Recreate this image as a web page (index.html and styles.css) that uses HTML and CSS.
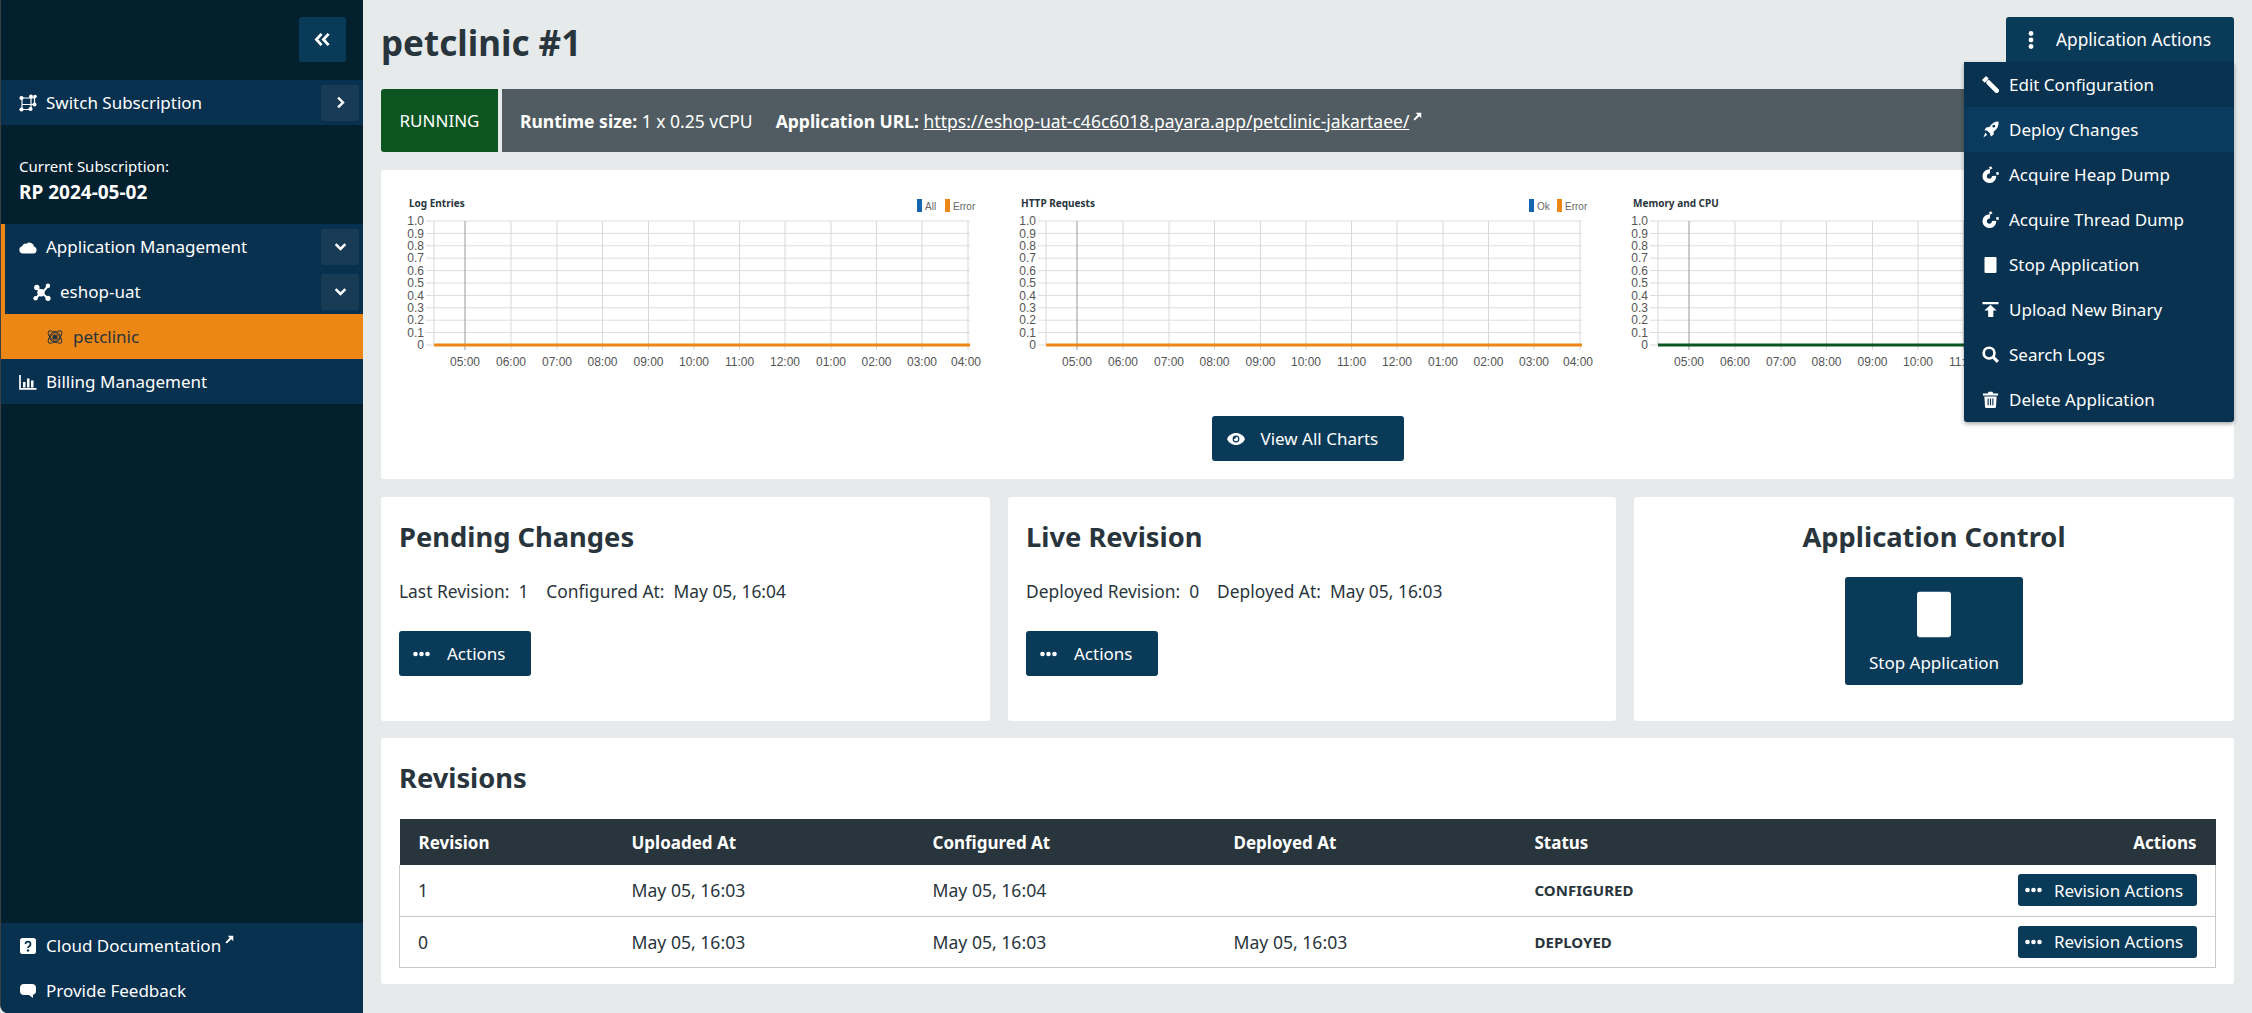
FILE: index.html
```html
<!DOCTYPE html>
<html lang="en">
<head>
<meta charset="utf-8">
<title>petclinic #1</title>
<link rel="stylesheet" href="styles.css">
</head>
<body>
<svg class="sprite" xmlns="http://www.w3.org/2000/svg">
  <symbol id="i-dbl" viewBox="0 0 18 16"><path d="M8 2L2.500 8 8 14M15.500 2L10 8l5.500 6" fill="none" stroke="currentColor" stroke-width="3"/></symbol>
  <symbol id="i-right" viewBox="0 0 16 16"><path d="M5 2l6 6-6 6" fill="none" stroke="currentColor" stroke-width="3"/></symbol>
  <symbol id="i-down" viewBox="0 0 16 16"><path d="M2 5l6 6 6-6" fill="none" stroke="currentColor" stroke-width="3"/></symbol>
  <symbol id="i-project" viewBox="0 0 18 18"><path d="M3 4h13M15.500 3V11M15 10.500H3M3 3.500v12M3 15.500h8.500M12 3v12" fill="none" stroke="currentColor" stroke-width="1.200"/><g fill="currentColor"><circle cx="2.500" cy="4" r="2.100"/><circle cx="12" cy="2.500" r="2"/><circle cx="16" cy="2.500" r="1.800"/><circle cx="15.500" cy="10.500" r="2"/><circle cx="2.500" cy="15.500" r="2.100"/><circle cx="11.500" cy="15" r="2.100"/></g></symbol>
  <symbol id="i-cloud" viewBox="0 0 18 14"><path d="M4 13.500a3.700 3.700 0 0 1-.8-7.300A3.400 3.400 0 0 1 7.600 3.700 4.700 4.700 0 0 1 15.200 6.700 3.500 3.500 0 0 1 14.500 13.500z" fill="currentColor"/></symbol>
  <symbol id="i-nodes" viewBox="0 0 18 18"><path d="M4 4.500l4 5M15 3l-6 7M8 10l-5 5M9 10l6 5.500" fill="none" stroke="currentColor" stroke-width="2"/><g fill="currentColor"><circle cx="3.800" cy="4.500" r="2.700"/><circle cx="15" cy="2.800" r="2.200"/><circle cx="8" cy="9.800" r="3.700"/><circle cx="2.600" cy="15.200" r="2.200"/><circle cx="15" cy="15.300" r="2.600"/></g></symbol>
  <symbol id="i-atom" viewBox="0 0 18 18"><g fill="none" stroke="currentColor" stroke-width="1"><ellipse cx="9" cy="9" rx="8.400" ry="3.800" transform="rotate(40 9 9)"/><ellipse cx="9" cy="9" rx="8.400" ry="3.800" transform="rotate(-40 9 9)"/><circle cx="9" cy="9" r="5.400"/></g><circle cx="9" cy="9" r="2.600" fill="currentColor"/></symbol>
  <symbol id="i-bars" viewBox="0 0 18 16"><path d="M1 1v13.800h16.500" fill="none" stroke="currentColor" stroke-width="1.700"/><path d="M4 8h2.500v5.500H4zM8 4.500h2.500v9H8zM12 6.500h2.500v7H12z" fill="currentColor"/></symbol>
  <symbol id="i-help" viewBox="0 0 16 16"><path d="M2.500 0h11A2.500 2.500 0 0 1 16 2.500v11a2.500 2.500 0 0 1-2.500 2.500h-11A2.500 2.500 0 0 1 0 13.500v-11A2.500 2.500 0 0 1 2.500 0z" fill="currentColor"/><path d="M5.500 6a2.500 2.500 0 1 1 3.800 2.200c-.8.500-1.300.9-1.300 1.900" fill="none" stroke="#08304f" stroke-width="1.800"/><circle cx="8" cy="12.500" r="1.200" fill="#08304f"/></symbol>
  <symbol id="i-comment" viewBox="0 0 16 14"><path d="M4 0h8a4 4 0 0 1 4 4v3a4 4 0 0 1-3 3.800V14l-4-3H4a4 4 0 0 1-4-4V4a4 4 0 0 1 4-4z" fill="currentColor"/></symbol>
  <symbol id="i-ext" viewBox="0 0 10 10"><path d="M3 .8h6.200V7L7 4.800 2 9.500.5 8 5.200 3z" fill="currentColor"/></symbol>
  <symbol id="i-dots-v" viewBox="0 0 6 18"><g fill="currentColor"><circle cx="3" cy="2.500" r="2.400"/><circle cx="3" cy="9" r="2.400"/><circle cx="3" cy="15.500" r="2.400"/></g></symbol>
  <symbol id="i-dots-h" viewBox="0 0 18 6"><g fill="currentColor"><circle cx="3" cy="3" r="2.300"/><circle cx="9" cy="3" r="2.300"/><circle cx="15" cy="3" r="2.300"/></g></symbol>
  <symbol id="i-wand" viewBox="0 0 18 18"><path d="M7 7L15.500 15.500" stroke="currentColor" stroke-width="5" stroke-linecap="round"/><path d="M0 4.300L4.300 0 7.200 2.900 2.900 7.200z" fill="currentColor"/></symbol>
  <symbol id="i-rocket" viewBox="0 0 18 18"><path d="M17.500.5c.4 4.500-1.200 8-5 10.500l-.3 3.500-3 1.800-.6-3-3-3-3-.5 1.700-3 3.500-.4C11 2.300 13.300.4 17.500.5z" fill="currentColor"/><path d="M3.500 12.500l2 2-4 3z" fill="currentColor"/><circle cx="12.500" cy="5.500" r="1.400" fill="#0a3a5d"/></symbol>
  <symbol id="i-magnet" viewBox="0 0 18 18"><path d="M8.500 5.800A5 5 0 1 0 12.800 10.500" fill="none" stroke="currentColor" stroke-width="4.600"/><path d="M7.200 1.500L9.500.3l1.700 2.200-2.400 1.300zM14.800 7l2.500-.8.700 2.700-2.500.7z" fill="currentColor"/></symbol>
  <symbol id="i-stop" viewBox="0 0 12 16"><rect width="12" height="16" rx="1" fill="currentColor"/></symbol>
  <symbol id="i-upload" viewBox="0 0 18 16"><path d="M.5 0h17v2.500H.5zM9 3l6.500 6H12v7H6.500V9H2.500z" fill="currentColor"/></symbol>
  <symbol id="i-search" viewBox="0 0 18 18"><circle cx="7.500" cy="7.500" r="5.700" fill="none" stroke="currentColor" stroke-width="2.800"/><path d="M11.500 11.500l5.300 5.300" stroke="currentColor" stroke-width="3.200"/></symbol>
  <symbol id="i-trash" viewBox="0 0 16 18"><path d="M0 2.700h5L6 .7h4l1 2h5v2H0z" fill="currentColor"/><path d="M1.500 5.700h13l-.7 11a1.300 1.300 0 0 1-1.300 1.300h-9a1.300 1.300 0 0 1-1.300-1.300z" fill="currentColor"/><path d="M5.500 8v7M8 8v7M10.500 8v7" stroke="#08324f" stroke-width="1.200"/></symbol>
  <symbol id="i-eye" viewBox="0 0 18 12"><path d="M9 0c4 0 7.500 2.500 9 6-1.500 3.500-5 6-9 6s-7.500-2.500-9-6c1.500-3.500 5-6 9-6z" fill="currentColor"/><circle cx="9" cy="6" r="3.400" fill="#093a58"/><path d="M9 3.800a2.200 2.200 0 1 1-2.200 2.200c1 .4 2.400-.9 2.200-2.200z" fill="currentColor"/></symbol>
  <symbol id="chart-grid" viewBox="0 0 590 190">
    <path class="grid-h" d="M27 31H571M27 43.400H571M27 55.800H571M27 68.200H571M27 80.600H571M27 93H571M27 105.400H571M27 117.800H571M27 130.200H571M27 142.600H571M27 155H35"/>
    <path class="grid-v" d="M35 31V155M112 31V160M158 31V160M203.500 31V160M249.500 31V160M295 31V160M340.500 31V160M386 31V160M432 31V160M477.500 31V160M523 31V160M569 31V160"/>
    <path class="grid-first" d="M66 31V160"/>
  </symbol>
</svg>

<div class="app">
  <aside class="sidebar">
    <div class="side-top"><button class="collapse"><svg class="ic-dbl"><use href="#i-dbl"/></svg></button></div>
    <div class="side-row">
      <svg class="ic"><use href="#i-project"/></svg><span class="side-label">Switch Subscription</span>
      <span class="side-btn"><svg class="ic-chev"><use href="#i-right"/></svg></span>
    </div>
    <div class="current">
      <div class="current-label">Current Subscription:</div>
      <div class="current-name">RP 2024-05-02</div>
    </div>
    <div class="nav-group">
      <div class="side-row in-group">
        <svg class="ic"><use href="#i-cloud"/></svg><span class="side-label">Application Management</span>
        <span class="side-btn"><svg class="ic-chev"><use href="#i-down"/></svg></span>
      </div>
      <div class="side-row in-group level-2">
        <svg class="ic"><use href="#i-nodes"/></svg><span class="side-label">eshop-uat</span>
        <span class="side-btn"><svg class="ic-chev"><use href="#i-down"/></svg></span>
      </div>
    </div>
    <div class="side-row active">
      <svg class="ic"><use href="#i-atom"/></svg><span class="side-label">petclinic</span>
    </div>
    <div class="side-row">
      <svg class="ic"><use href="#i-bars"/></svg><span class="side-label">Billing Management</span>
    </div>
    <div class="side-footer">
      <div class="side-row">
        <svg class="ic ic-small"><use href="#i-help"/></svg><span class="side-label">Cloud Documentation</span><svg class="ic-ext"><use href="#i-ext"/></svg>
      </div>
      <div class="side-row">
        <svg class="ic ic-small"><use href="#i-comment"/></svg><span class="side-label">Provide Feedback</span>
      </div>
    </div>
  </aside>

  <main class="main">
    <header class="page-head">
      <h1>petclinic #1</h1>
      <button class="app-actions"><svg class="ic-dots-v"><use href="#i-dots-v"/></svg>Application Actions</button>
    </header>

    <ul class="menu">
      <li><svg class="ic"><use href="#i-wand"/></svg>Edit Configuration</li>
      <li class="hover"><svg class="ic"><use href="#i-rocket"/></svg>Deploy Changes</li>
      <li><svg class="ic"><use href="#i-magnet"/></svg>Acquire Heap Dump</li>
      <li><svg class="ic"><use href="#i-magnet"/></svg>Acquire Thread Dump</li>
      <li><svg class="ic ic-stop"><use href="#i-stop"/></svg>Stop Application</li>
      <li><svg class="ic"><use href="#i-upload"/></svg>Upload New Binary</li>
      <li><svg class="ic"><use href="#i-search"/></svg>Search Logs</li>
      <li><svg class="ic"><use href="#i-trash"/></svg>Delete Application</li>
    </ul>

    <div class="status">
      <div class="status-state">RUNNING</div>
      <div class="status-info">
        <span class="info-item"><b>Runtime size:</b> 1 x 0.25 vCPU</span>
        <span class="info-item"><b>Application URL:</b> <a href="#" class="url">https://eshop-uat-c46c6018.payara.app/petclinic-jakartaee/</a><svg class="ic-ext"><use href="#i-ext"/></svg></span>
      </div>
    </div>

    <section class="card chart-card">
      <div class="charts">
        <svg class="chart" viewBox="0 0 590 190">
          <use href="#chart-grid" width="590" height="190"/>
          <g class="axis-y"><text x="25" y="35">1.0</text><text x="25" y="47.500">0.9</text><text x="25" y="60">0.8</text><text x="25" y="72">0.7</text><text x="25" y="84.500">0.6</text><text x="25" y="97">0.5</text><text x="25" y="109.500">0.4</text><text x="25" y="122">0.3</text><text x="25" y="134">0.2</text><text x="25" y="146.500">0.1</text><text x="25" y="159">0</text></g>
          <g class="axis-x"><text x="66" y="176">05:00</text><text x="112" y="176">06:00</text><text x="158" y="176">07:00</text><text x="203.500" y="176">08:00</text><text x="249.500" y="176">09:00</text><text x="295" y="176">10:00</text><text x="340.500" y="176">11:00</text><text x="386" y="176">12:00</text><text x="432" y="176">01:00</text><text x="477.500" y="176">02:00</text><text x="523" y="176">03:00</text><text x="567" y="176">04:00</text></g>
          <path class="line-orange" d="M35 155H571"/>
          <text class="chart-title" x="10" y="17">Log Entries</text>
          <rect class="lg-blue" x="518" y="9" width="5" height="13"/><text class="lg-text" x="526" y="20">All</text>
          <rect class="lg-orange" x="546" y="9" width="5" height="13"/><text class="lg-text" x="554" y="20">Error</text>
        </svg>
        <svg class="chart" viewBox="0 0 590 190">
          <use href="#chart-grid" width="590" height="190"/>
          <g class="axis-y"><text x="25" y="35">1.0</text><text x="25" y="47.500">0.9</text><text x="25" y="60">0.8</text><text x="25" y="72">0.7</text><text x="25" y="84.500">0.6</text><text x="25" y="97">0.5</text><text x="25" y="109.500">0.4</text><text x="25" y="122">0.3</text><text x="25" y="134">0.2</text><text x="25" y="146.500">0.1</text><text x="25" y="159">0</text></g>
          <g class="axis-x"><text x="66" y="176">05:00</text><text x="112" y="176">06:00</text><text x="158" y="176">07:00</text><text x="203.500" y="176">08:00</text><text x="249.500" y="176">09:00</text><text x="295" y="176">10:00</text><text x="340.500" y="176">11:00</text><text x="386" y="176">12:00</text><text x="432" y="176">01:00</text><text x="477.500" y="176">02:00</text><text x="523" y="176">03:00</text><text x="567" y="176">04:00</text></g>
          <path class="line-orange" d="M35 155H571"/>
          <text class="chart-title" x="10" y="17">HTTP Requests</text>
          <rect class="lg-blue" x="518" y="9" width="5" height="13"/><text class="lg-text" x="526" y="20">Ok</text>
          <rect class="lg-orange" x="546" y="9" width="5" height="13"/><text class="lg-text" x="554" y="20">Error</text>
        </svg>
        <svg class="chart" viewBox="0 0 590 190">
          <use href="#chart-grid" width="590" height="190"/>
          <g class="axis-y"><text x="25" y="35">1.0</text><text x="25" y="47.500">0.9</text><text x="25" y="60">0.8</text><text x="25" y="72">0.7</text><text x="25" y="84.500">0.6</text><text x="25" y="97">0.5</text><text x="25" y="109.500">0.4</text><text x="25" y="122">0.3</text><text x="25" y="134">0.2</text><text x="25" y="146.500">0.1</text><text x="25" y="159">0</text></g>
          <g class="axis-x"><text x="66" y="176">05:00</text><text x="112" y="176">06:00</text><text x="158" y="176">07:00</text><text x="203.500" y="176">08:00</text><text x="249.500" y="176">09:00</text><text x="295" y="176">10:00</text><text x="340.500" y="176">11:00</text></g>
          <path class="line-green" d="M35 155H571"/>
          <text class="chart-title" x="10" y="17">Memory and CPU</text>
        </svg>
      </div>
      <button class="btn btn-charts"><svg class="ic-eye"><use href="#i-eye"/></svg>View All Charts</button>
    </section>

    <div class="panels">
      <section class="card panel">
        <h2>Pending Changes</h2>
        <p class="panel-info"><span>Last Revision:&nbsp; 1</span><span>Configured At:&nbsp; May 05, 16:04</span></p>
        <button class="btn btn-actions"><svg class="ic-dots-h"><use href="#i-dots-h"/></svg>Actions</button>
      </section>
      <section class="card panel">
        <h2>Live Revision</h2>
        <p class="panel-info"><span>Deployed Revision:&nbsp; 0</span><span>Deployed At:&nbsp; May 05, 16:03</span></p>
        <button class="btn btn-actions"><svg class="ic-dots-h"><use href="#i-dots-h"/></svg>Actions</button>
      </section>
      <section class="card panel panel-center">
        <h2>Application Control</h2>
        <button class="btn btn-stop"><svg class="ic-stop-large"><use href="#i-stop"/></svg>Stop Application</button>
      </section>
    </div>

    <section class="card revisions">
      <h2>Revisions</h2>
      <table>
        <colgroup><col class="col-rev"><col class="col-std"><col class="col-std"><col class="col-std"><col class="col-std"><col></colgroup>
        <thead>
          <tr><th>Revision</th><th>Uploaded At</th><th>Configured At</th><th>Deployed At</th><th>Status</th><th class="right">Actions</th></tr>
        </thead>
        <tbody>
          <tr><td>1</td><td>May 05, 16:03</td><td>May 05, 16:04</td><td></td><td class="state">CONFIGURED</td><td class="right"><button class="btn btn-rev"><svg class="ic-dots-h"><use href="#i-dots-h"/></svg>Revision Actions</button></td></tr>
          <tr><td>0</td><td>May 05, 16:03</td><td>May 05, 16:03</td><td>May 05, 16:03</td><td class="state">DEPLOYED</td><td class="right"><button class="btn btn-rev"><svg class="ic-dots-h"><use href="#i-dots-h"/></svg>Revision Actions</button></td></tr>
        </tbody>
      </table>
    </section>
  </main>
</div>
</body>
</html>
```

FILE: styles.css
```css
* { box-sizing: border-box; }
html, body { margin: 0; height: 100%; }
body {
  background: #e6eaeb;
  color: #29353c;
  font-family: "Noto Sans", Roboto, sans-serif;
  font-size: 17px;
  overflow: hidden;
}
.sprite { position: absolute; width: 0; height: 0; }
button { font: inherit; border: 0; cursor: pointer; }

.app { display: flex; height: 1013px; }

/* Sidebar */
.sidebar {
  width: 363px;
  flex: none;
  display: flex;
  flex-direction: column;
  background: #03202e;
  border-left: 1px solid #3a3f42;
  border-bottom-left-radius: 8px;
  overflow: hidden;
  color: #fff;
}
.side-top { height: 80px; padding: 17px 17px 0 0; display: flex; justify-content: flex-end; align-items: flex-start; }
.collapse {
  width: 47px; height: 45px; border-radius: 3px;
  background: #093a58; color: #fff;
  display: flex; align-items: center; justify-content: center;
}
.ic-dbl { width: 17px; height: 15px; }
.side-row {
  height: 45px;
  display: flex;
  align-items: center;
  background: #08304f;
  padding: 0 4px 0 18px;
  flex: none;
}
.side-row .ic { width: 18px; height: 18px; flex: none; margin-right: 9px; }
.side-row .ic-small { width: 16px; height: 16px; margin-left: 1px; margin-right: 10px; }
.side-label { white-space: nowrap; }
.side-btn {
  margin-left: auto;
  width: 38px; height: 36px;
  border-radius: 3px;
  background: #193c56;
  display: flex; align-items: center; justify-content: center;
}
.ic-chev { width: 13px; height: 13px; }
.current { height: 99px; padding: 31px 18px 0; }
.current-label { font-size: 15px; line-height: 20px; }
.current-name { font-size: 19px; font-weight: 700; line-height: 24px; margin-top: 4px; }
.nav-group { border-left: 4px solid #ec8615; }
.in-group { padding-left: 14px; }
.level-2 { padding-left: 28px; }
.active { background: #ec8615; color: #29353c; padding-left: 45px; }
.side-footer { margin-top: auto; }
.ic-ext { width: 9px; height: 9px; flex: none; margin-left: 4px; vertical-align: 7px; }
.side-row .ic-ext { align-self: flex-start; margin-top: 12px; }

/* Main */
.main { flex: 1; min-width: 0; padding: 17px 18px 0; position: relative; }
.page-head { display: flex; justify-content: space-between; align-items: center; height: 45px; margin-bottom: 27px; }
h1 { margin: 0; font-size: 35px; font-weight: 700; line-height: 45px; padding-top: 5px; }
.app-actions {
  width: 228px; height: 45px;
  background: #093a58; color: #fff;
  border-radius: 3px 3px 0 0;
  display: flex; align-items: center;
  padding: 0 0 0 22px;
  white-space: nowrap;
  font-size: 17.300px;
}
.ic-dots-v { width: 6px; height: 18px; margin-right: 22px; }

.menu {
  position: absolute; z-index: 5;
  top: 62px; right: 18px;
  width: 270px;
  margin: 0; padding: 0;
  list-style: none;
  background: #08324f;
  color: #fff;
  border-radius: 0 0 3px 3px;
  box-shadow: 0 2px 4px rgba(0,0,0,.35);
}
.menu li { height: 45px; display: flex; align-items: center; padding-left: 18px; white-space: nowrap; }
.menu li.hover { background: #0a3a5d; }
.menu .ic { width: 17px; height: 17px; margin-right: 10px; flex: none; }
.menu .ic-stop { width: 17px; height: 16px; }

.status { display: flex; gap: 4px; height: 63px; margin-bottom: 18px; color: #fff; }
.status-state {
  width: 117px; background: #0c5420; border-radius: 3px 0 0 3px;
  display: flex; align-items: center; justify-content: center;
}
.status-info {
  flex: 1; background: #505c61; border-radius: 0 3px 3px 0;
  display: flex; align-items: center; gap: 23px; padding-left: 18px;
  font-size: 17.500px;
}
.info-item { white-space: nowrap; }
.url { color: #fff; }

.card { background: #fff; border-radius: 3px; }

/* Charts */
.chart-card { height: 309px; margin-bottom: 18px; padding: 20px 18px 0; display: flex; flex-direction: column; align-items: center; overflow: hidden; }
.charts { display: flex; gap: 22px; align-self: flex-start; }
.chart { width: 590px; height: 190px; flex: none; display: block; font-family: "Liberation Sans", Arial, sans-serif; }
.grid-h { stroke: #dcdcdc; stroke-width: 1; fill: none; }
.grid-v { stroke: #d8d8d8; stroke-width: 1; fill: none; }
.grid-first { stroke: #999; stroke-width: 1; fill: none; }
.axis-y text { font-size: 12px; fill: #555; text-anchor: end; }
.axis-x text { font-size: 12px; fill: #555; text-anchor: middle; }
.line-orange { stroke: #ec8615; stroke-width: 3; fill: none; }
.line-green { stroke: #0c5420; stroke-width: 3; fill: none; }
.chart-title { font-family: "Noto Sans", sans-serif; font-size: 10px; font-weight: 700; fill: #29353c; }
.lg-blue { fill: #1565b0; }
.lg-orange { fill: #ec8615; }
.lg-text { font-size: 10px; fill: #666; }

.btn { background: #093a58; color: #fff; border-radius: 3px; white-space: nowrap; }
.btn-charts {
  margin-top: 36px; width: 192px; height: 45px; flex: none;
  display: flex; align-items: center; padding-left: 15px;
}
.ic-eye { width: 18px; height: 12px; margin-right: 16px; flex: none; }

/* Panels */
.panels { display: grid; grid-template-columns: 609px 608px 1fr; gap: 18px; margin-bottom: 17px; }
.panel { height: 224px; padding: 20px 18px 0; }
h2 { margin: 0; font-size: 27.300px; font-weight: 700; line-height: 40px; }
.panel-info { margin: 0; padding-top: 22px; line-height: 24px; display: flex; gap: 18px; white-space: nowrap; font-size: 17.400px; }
.btn-actions {
  margin-top: 28px; width: 132px; height: 45px;
  display: flex; align-items: center; padding-left: 13px;
}
.ic-dots-h { width: 19px; height: 6px; flex: none; margin-right: 16px; }
.panel-center { text-align: center; }
.btn-stop {
  margin: 20px auto 0; width: 178px; height: 108px;
  display: flex; flex-direction: column; align-items: center;
  padding-top: 14px;
}
.ic-stop-large { width: 34px; height: 47px; margin-bottom: 13px; }

/* Revisions */
.revisions { height: 246px; padding: 20px 18px 0; }
.revisions h2 { margin-bottom: 21px; }
table { width: 100%; border-collapse: collapse; table-layout: fixed; }
.col-rev { width: 213px; }
.col-std { width: 301px; }
th {
  background: #29353c; color: #fff;
  height: 46px; text-align: left; padding: 0 19px; font-weight: 700; font-size: 17px;
}
td { height: 51px; padding: 0 19px; border-bottom: 1px solid #c8c8c8; white-space: nowrap; font-size: 17.600px; }
tbody tr td:first-child { border-left: 1px solid #c8c8c8; padding-left: 18px; }
tbody tr td:last-child { border-right: 1px solid #c8c8c8; padding-right: 18px; }
.right { text-align: right; }
td.state { font-size: 15px; font-weight: 700; }
.btn-rev {
  width: 179px; height: 32px;
  display: inline-flex; align-items: center; padding-left: 6px;
  vertical-align: middle; font-size: 17px;
}
.btn-rev .ic-dots-h { margin-right: 11px; }
```
